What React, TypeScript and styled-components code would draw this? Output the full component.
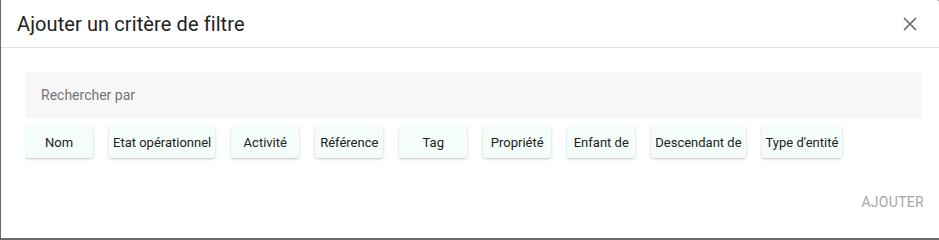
import React from 'react';
import styled, { createGlobalStyle } from 'styled-components';

const GlobalStyle = createGlobalStyle`
  html, body {
    margin: 0;
    padding: 0;
    background: #6b6b6b;
  }
  body {
    font-family: Roboto, "Liberation Sans", Arial, sans-serif;
  }
`;

const Page = styled.div`
  width: 939px;
  height: 240px;
  padding-left: 1px;
  box-sizing: border-box;
  overflow: hidden;
`;

const Dialog = styled.section`
  width: 938px;
  height: 238px;
  background: #ffffff;
  display: flex;
  flex-direction: column;
  border-top-right-radius: 2px;
`;

const Header = styled.header`
  height: 48px;
  display: flex;
  align-items: center;
  justify-content: space-between;
  padding: 0 17px 0 16px;
  border-bottom: 1px solid #e2e2e2;
  box-sizing: border-box;
`;

const Title = styled.h2`
  margin: 0;
  font-size: 20px;
  font-weight: 400;
  color: #222222;
  letter-spacing: 0.1px;
`;

const CloseButton = styled.button`
  width: 24px;
  height: 24px;
  padding: 0;
  border: none;
  background: none;
  display: flex;
  align-items: center;
  justify-content: center;
  color: #666666;
`;

const Body = styled.div`
  flex: 1;
  padding: 24px 18px 0 24px;
  display: flex;
  flex-direction: column;
  gap: 6px;
`;

const SearchField = styled.div`
  height: 46px;
  background: #f7f7f7;
  display: flex;
  align-items: center;
  padding-left: 16px;
  font-size: 14px;
  color: #757575;
`;

const ChipRow = styled.div`
  width: 819px;
  display: flex;
  gap: 16px;
  padding: 2px 0 6px 0;
  overflow: hidden;
`;

const Chip = styled.button`
  flex: none;
  height: 32px;
  min-width: 68px;
  padding: 0 4px;
  border: none;
  border-radius: 3px;
  background: #f4fdf9;
  box-shadow: 0 1px 3px rgba(0, 0, 0, 0.2), 0 1px 1px rgba(0, 0, 0, 0.05);
  font-family: Roboto, "Liberation Sans", Arial, sans-serif;
  font-size: 13px;
  color: #222222;
  white-space: nowrap;
`;

const Footer = styled.footer`
  height: 44px;
  display: flex;
  align-items: flex-start;
  justify-content: flex-end;
  padding-right: 15px;
`;

const ActionButton = styled.button`
  border: none;
  background: none;
  padding: 0;
  font-family: Roboto, "Liberation Sans", Arial, sans-serif;
  font-size: 14px;
  letter-spacing: 0.3px;
  text-transform: uppercase;
  color: #a6a6a6;
`;

const criteria = [
  'Nom',
  'Etat opérationnel',
  'Activité',
  'Référence',
  'Tag',
  'Propriété',
  'Enfant de',
  'Descendant de',
  "Type d'entité",
];

function App() {
  return (
    <Page>
      <GlobalStyle />
      <Dialog>
        <Header>
          <Title>Ajouter un critère de filtre</Title>
          <CloseButton aria-label="Fermer">
            <svg width="14" height="14" viewBox="0 0 14 14">
              <path d="M1 1L13 13M13 1L1 13" stroke="currentColor" strokeWidth="1.6" />
            </svg>
          </CloseButton>
        </Header>
        <Body>
          <SearchField>Rechercher par</SearchField>
          <ChipRow>
            {criteria.map((c) => (
              <Chip key={c}>{c}</Chip>
            ))}
          </ChipRow>
        </Body>
        <Footer>
          <ActionButton>Ajouter</ActionButton>
        </Footer>
      </Dialog>
    </Page>
  );
}

export default App;
